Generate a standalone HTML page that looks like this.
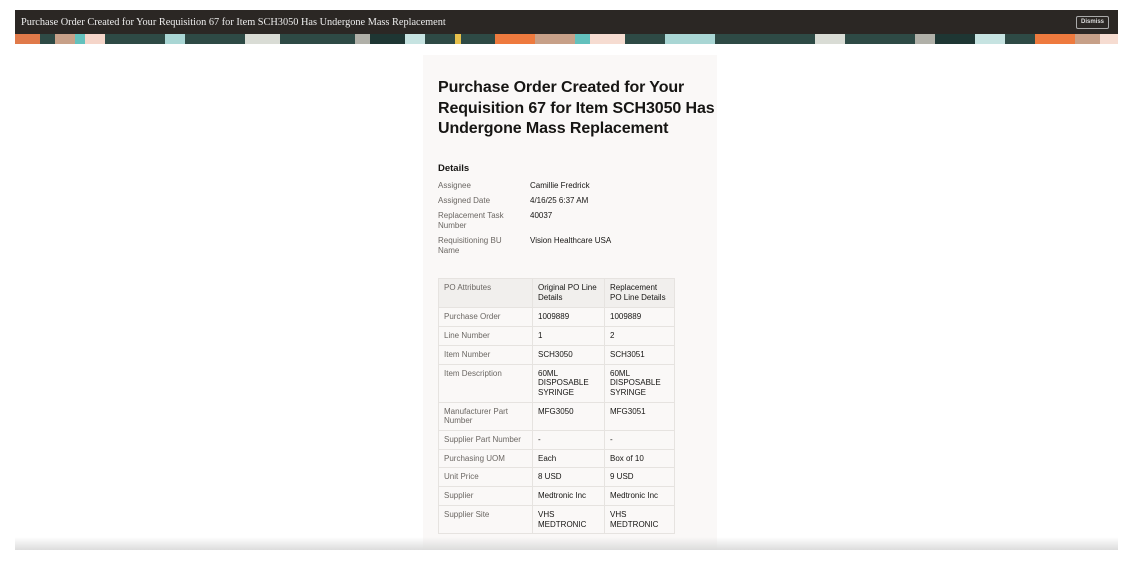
<!DOCTYPE html>
<html><head><style>
*{margin:0;padding:0;box-sizing:border-box}
body{width:1140px;height:565px;background:#fff;position:relative;overflow:hidden;font-family:"Liberation Sans",sans-serif}
.bar{position:absolute;left:15px;top:10px;width:1103px;height:24px;background:#2b2724;color:#eee;font-family:"Liberation Serif",serif;font-size:10.3px;line-height:25px;padding-left:6px}
.dis{position:absolute;right:9px;top:6px;border:1px solid #aaa;border-radius:2px;font-family:"Liberation Sans",sans-serif;font-size:6px;line-height:11px;padding:0 4px;font-weight:bold;color:#ddd}
.pat{position:absolute;left:15px;top:34px;width:1103px;height:10px;background:linear-gradient(90deg,#e07a4a 0 25px,#2e4a45 25px 40px,#c7a088 40px 60px,#63c1bd 60px 70px,#f5d5c9 70px 90px,#2e4a45 90px 150px,#a9d6d4 150px 170px,#2e4a45 170px 230px,#d9dcd5 230px 265px,#2e4a45 265px 340px,#b0b0a8 340px 355px,#1e3633 355px 390px,#c6e3e1 390px 410px,#2e4a45 410px 440px,#e6c04c 440px 446px,#2e4a45 446px 480px,#ee7a3e 480px 520px,#c7a088 520px 560px,#63c1bd 560px 575px,#f6dcd1 575px 610px,#2e4a45 610px 650px,#a9d6d4 650px 700px,#2e4a45 700px 800px,#d9dcd5 800px 830px,#2e4a45 830px 900px,#b0b0a8 900px 920px,#1e3633 920px 960px,#c6e3e1 960px 990px,#2e4a45 990px 1020px,#ee7a3e 1020px 1060px,#c7a088 1060px 1085px,#f6dcd1 1085px)}
.card{position:absolute;left:423px;top:55px;width:294px;height:495px;background:#faf8f7}
h1{position:absolute;left:438px;top:78px;width:290px;font-size:16px;line-height:20.5px;font-weight:bold;color:#161513;letter-spacing:-0.1px}
.det{position:absolute;left:438px;top:163px;font-size:9.5px;font-weight:bold;color:#161513}
.kv{position:absolute;left:438px;font-size:8px;line-height:10px;color:#161513}
.kv span{position:absolute;left:0;width:85px;color:#6b6763}
.kv b{position:absolute;left:92px;font-weight:normal;white-space:nowrap}
table{position:absolute;left:438px;top:278px;width:237px;border-collapse:collapse;font-size:8px;line-height:9.7px;color:#161513}
td{border:1px solid #e6e3e0;padding:4px 5px 4px;vertical-align:top;background:#faf8f7}
td:first-child{color:#6b6763;width:94px}
td:nth-child(2){width:72px}
tr:first-child td{background:#f1efed;padding:4px 5px 5px}
.fade{position:absolute;left:15px;top:537px;width:1103px;height:13px;background:linear-gradient(#fff0,#dcdcdc)}
</style></head><body>
<div class="bar">Purchase Order Created for Your Requisition 67 for Item SCH3050 Has Undergone Mass Replacement<div class="dis">Dismiss</div></div>
<div class="pat"></div>
<div class="card"></div>
<h1>Purchase Order Created for Your<br>Requisition 67 for Item SCH3050 Has<br>Undergone Mass Replacement</h1>
<div class="det">Details</div>
<div class="kv" style="top:181px"><span>Assignee</span><b>Camillie Fredrick</b></div>
<div class="kv" style="top:196px"><span>Assigned Date</span><b>4/16/25 6:37 AM</b></div>
<div class="kv" style="top:211px"><span>Replacement Task Number</span><b>40037</b></div>
<div class="kv" style="top:236px"><span>Requisitioning BU Name</span><b>Vision Healthcare USA</b></div>
<table>
<tr><td>PO Attributes</td><td>Original PO Line Details</td><td>Replacement PO Line Details</td></tr>
<tr><td>Purchase Order</td><td>1009889</td><td>1009889</td></tr>
<tr><td>Line Number</td><td>1</td><td>2</td></tr>
<tr><td>Item Number</td><td>SCH3050</td><td>SCH3051</td></tr>
<tr><td>Item Description</td><td>60ML DISPOSABLE SYRINGE</td><td>60ML DISPOSABLE SYRINGE</td></tr>
<tr><td>Manufacturer Part Number</td><td>MFG3050</td><td>MFG3051</td></tr>
<tr><td>Supplier Part Number</td><td>-</td><td>-</td></tr>
<tr><td>Purchasing UOM</td><td>Each</td><td>Box of 10</td></tr>
<tr><td>Unit Price</td><td>8 USD</td><td>9 USD</td></tr>
<tr><td>Supplier</td><td>Medtronic Inc</td><td>Medtronic Inc</td></tr>
<tr><td>Supplier Site</td><td>VHS MEDTRONIC</td><td>VHS MEDTRONIC</td></tr>
</table>
<div class="fade"></div>
</body></html>
